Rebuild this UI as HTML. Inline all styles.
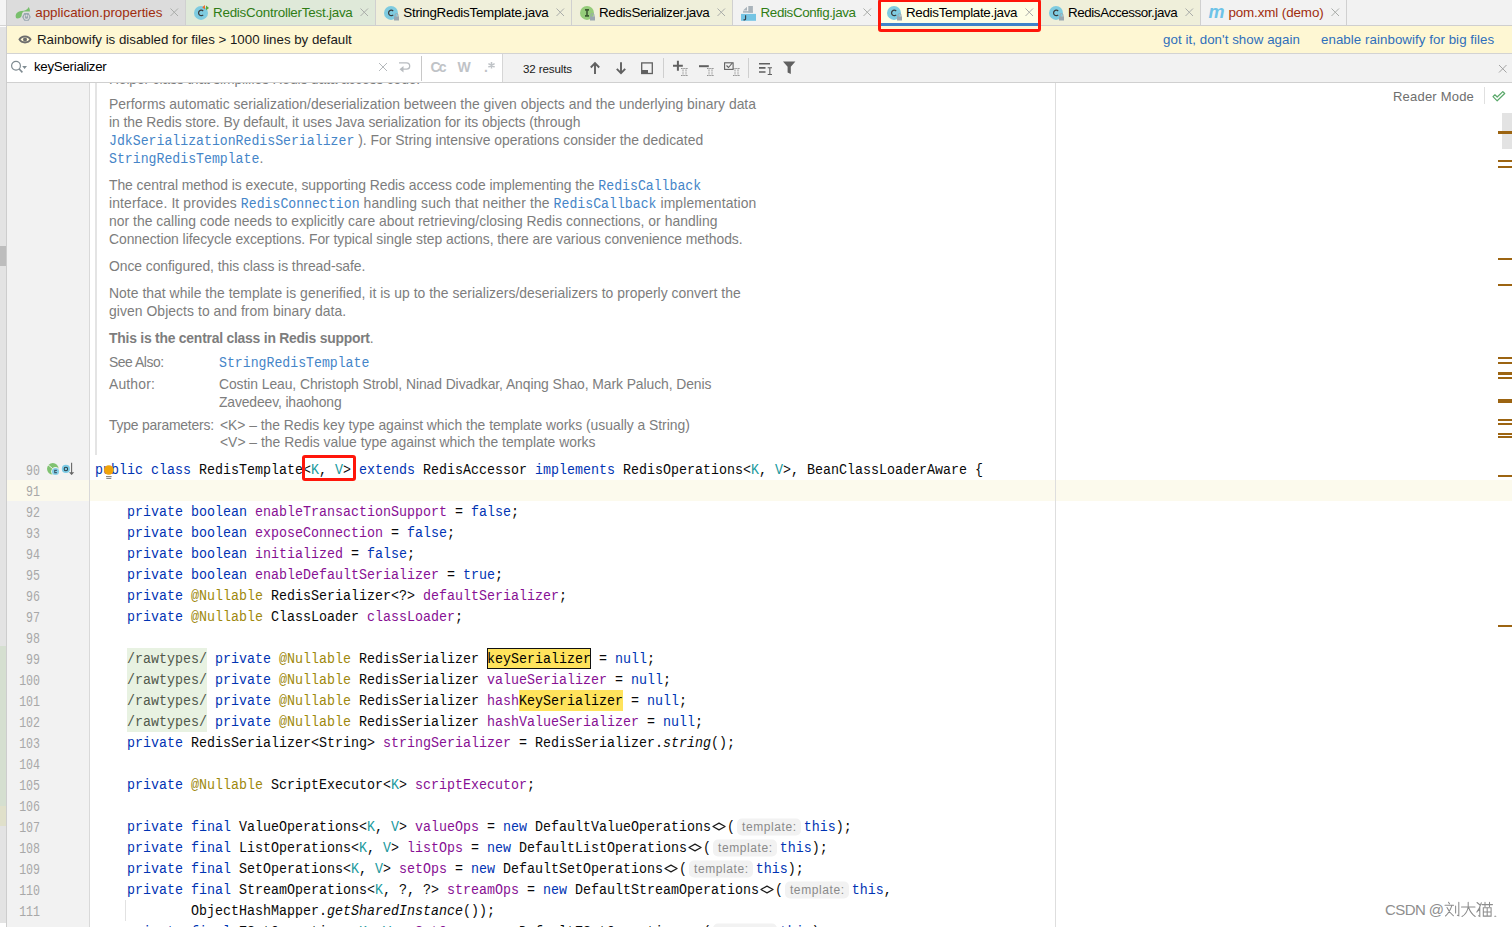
<!DOCTYPE html><html><head><meta charset="utf-8"><style>
*{margin:0;padding:0;box-sizing:border-box}
html,body{width:1512px;height:927px;overflow:hidden;background:#fff;position:relative}
body{font-family:"Liberation Sans",sans-serif}
.ui{font-family:"Liberation Sans",sans-serif;font-size:13.3px;line-height:16px;color:#000}
.code{font-family:"Liberation Mono",monospace;font-size:13.33px;line-height:21px;color:#080808;height:21px;transform:scaleY(1.1);transform-origin:0 5px}
.kw{color:#0033b3}.fd{color:#871094}.an{color:#9e880d}.tp{color:#20999d}
.ln{font-family:"Liberation Mono",monospace;font-size:11.6px;line-height:21px;color:#a8a8a8;text-align:right;width:40px;height:21px;transform:scaleY(1.2);transform-origin:0 6px}
.doc{font-family:"Liberation Sans",sans-serif;font-size:13.9px;line-height:18px;color:#7d7d7d}
.lk{display:inline-block;font-family:"Liberation Mono",monospace;font-size:13.2px;color:#4585c8;transform:scaleY(1.1);transform-origin:0 70%}
.hint{display:inline-block;font-family:"Liberation Sans",sans-serif;font-size:12px;letter-spacing:0.6px;color:#8a8a8a;background:#f2f2f2;border-radius:5px;height:17px;line-height:17px;padding:0 4px 0 5px;vertical-align:0px;margin:0 3px 0 2px;transform:scaleY(0.909);transform-origin:0 50%}
.tabt{font-family:"Liberation Sans",sans-serif;font-size:13.4px;line-height:16px}
</style></head><body><div style="position:absolute;left:0px;top:0px;width:6px;height:25px;background:#f4f4f4"></div><div style="position:absolute;left:0px;top:25px;width:6px;height:1px;background:#d4d4d4"></div><div style="position:absolute;left:0px;top:26px;width:6px;height:1px;background:#fdfdfd"></div><div style="position:absolute;left:0px;top:27px;width:6px;height:900px;background:#e3e3e3"></div><div style="position:absolute;left:6px;top:0px;width:1px;height:927px;background:#cdcdcd"></div><div style="position:absolute;left:0px;top:646px;width:6px;height:160px;background:#d5dfd0"></div><div style="position:absolute;left:0px;top:806px;width:6px;height:20px;background:#e0e0ca"></div><div style="position:absolute;left:0px;top:923px;width:6px;height:4px;background:#fff"></div><div style="position:absolute;left:0px;top:246px;width:6px;height:20px;background:#bdbdbd"></div><div style="position:absolute;left:7px;top:0px;width:1505px;height:25px;background:#f2f2f2"></div><div style="position:absolute;left:7px;top:25px;width:1505px;height:1px;background:#cfcfcf"></div><div style="position:absolute;left:7px;top:0px;width:178px;height:25px;background:#dcdcdc"></div><div style="position:absolute;left:185px;top:0px;width:1px;height:25px;background:#d0d0d0"></div><div class="tabt" id="qfad393cc" style="position:absolute;left:35.2px;top:5px;white-space:pre;color:#a02d0e;letter-spacing:0.000px">application.properties</div><svg style="position:absolute;left:170px;top:8px" width="9" height="9"><path d="M0.5 0.5L8 8M8 0.5L0.5 8" stroke="#a9aca9" stroke-width="1"/></svg><svg style="position:absolute;left:12px;top:3px" width="23" height="20" viewBox="12 3 23 20"><path d="M16.2 18.3C14.6 14.5 17 11.4 21.5 11 25 10.6 27.5 9.5 28.7 6.9 29.8 8.5 30 10 29.9 11.6L23.6 11.6C22.4 12.4 21.9 13.8 21.7 15.4 21.2 17.4 19 18.8 16.2 18.3z" fill="#78bf6c"/><path d="M22.1 16.9L24.3 13H28.6L30.8 16.9 28.6 20.8H24.3z" fill="#9aa7b0"/><path d="M25.3 15.3A2.2 2.2 0 1 0 27.7 15.3" stroke="#dcdcdc" stroke-width="1.1" fill="none"/><path d="M26.5 14.6v2" stroke="#dcdcdc" stroke-width="1"/></svg><div style="position:absolute;left:186px;top:0px;width:189px;height:25px;background:#dfe9d9"></div><div style="position:absolute;left:375px;top:0px;width:1px;height:25px;background:#d0d0d0"></div><div class="tabt" id="q5060e5fc" style="position:absolute;left:213px;top:5px;white-space:pre;color:#2f7d16;letter-spacing:-0.231px">RedisControllerTest.java</div><svg style="position:absolute;left:360px;top:8px" width="9" height="9"><path d="M0.5 0.5L8 8M8 0.5L0.5 8" stroke="#a9aca9" stroke-width="1"/></svg><svg style="position:absolute;left:194px;top:5px" width="16" height="16"><circle cx="7" cy="7.9" r="7" fill="#7ecbe0"/><path d="M9.2 6A2.7 2.7 0 1 0 9.2 9.8" stroke="#3a3a3a" stroke-width="1.2" fill="none"/><path d="M11 0L8.2 2.3 11 4.6z" fill="#e8702a"/><path d="M12 0.6l3 2.3-3 2.3z" fill="#59a83a"/></svg><div style="position:absolute;left:376px;top:0px;width:195px;height:25px;background:#efefda"></div><div style="position:absolute;left:571px;top:0px;width:1px;height:25px;background:#d0d0d0"></div><div class="tabt" id="qaf4875bb" style="position:absolute;left:403.3px;top:5px;white-space:pre;color:#000;letter-spacing:-0.276px">StringRedisTemplate.java</div><svg style="position:absolute;left:556px;top:8px" width="9" height="9"><path d="M0.5 0.5L8 8M8 0.5L0.5 8" stroke="#a9aca9" stroke-width="1"/></svg><svg style="position:absolute;left:384px;top:5px" width="16" height="16"><circle cx="7" cy="7.9" r="7" fill="#7ecbe0"/><path d="M9.2 6A2.7 2.7 0 1 0 9.2 9.8" stroke="#3a3a3a" stroke-width="1.2" fill="none"/><rect x="10" y="11.5" width="5" height="4" fill="#9aa7b0"/><path d="M11 12V10a1.5 1.5 0 0 1 3 0v2" stroke="#9aa7b0" fill="none"/></svg><div style="position:absolute;left:572px;top:0px;width:160px;height:25px;background:#efefda"></div><div style="position:absolute;left:732px;top:0px;width:1px;height:25px;background:#d0d0d0"></div><div class="tabt" id="qa6eb2fc3" style="position:absolute;left:599px;top:5px;white-space:pre;color:#000;letter-spacing:-0.361px">RedisSerializer.java</div><svg style="position:absolute;left:717px;top:8px" width="9" height="9"><path d="M0.5 0.5L8 8M8 0.5L0.5 8" stroke="#a9aca9" stroke-width="1"/></svg><svg style="position:absolute;left:580px;top:5px" width="16" height="16"><circle cx="7" cy="7.9" r="7" fill="#95cc7a"/><path d="M5 4.9h4M5 10.9h4M7 4.9v6" stroke="#3d5a32" stroke-width="1.6"/><rect x="10" y="11.5" width="5" height="4" fill="#9aa7b0"/><path d="M11 12V10a1.5 1.5 0 0 1 3 0v2" stroke="#9aa7b0" fill="none"/></svg><div style="position:absolute;left:733px;top:0px;width:145px;height:25px;background:#f2f2f2"></div><div style="position:absolute;left:878px;top:0px;width:1px;height:25px;background:#d0d0d0"></div><div class="tabt" id="q78b534ed" style="position:absolute;left:760.6px;top:5px;white-space:pre;color:#2f7d16;letter-spacing:-0.390px">RedisConfig.java</div><svg style="position:absolute;left:863px;top:8px" width="9" height="9"><path d="M0.5 0.5L8 8M8 0.5L0.5 8" stroke="#a9aca9" stroke-width="1"/></svg><svg style="position:absolute;left:741px;top:5px" width="16" height="17"><path d="M2 5.6L6 1.8v3.8z" fill="#aab4bc"/><rect x="7.3" y="1" width="4.6" height="6.7" fill="#aab4bc"/><rect x="2" y="6.1" width="9.9" height="1.6" fill="#aab4bc"/><rect x="0" y="8.9" width="15" height="6.9" fill="#74c4e4"/><path d="M4.6 10.2v3.6a1.1 1.1 0 0 1-1.1 1.1H2.5" stroke="#333c44" stroke-width="1.1" fill="none"/></svg><div style="position:absolute;left:879px;top:0px;width:161px;height:25px;background:#fefee6"></div><div style="position:absolute;left:1040px;top:0px;width:1px;height:25px;background:#d0d0d0"></div><div class="tabt" id="qc9c36ca3" style="position:absolute;left:906px;top:5px;white-space:pre;color:#000;letter-spacing:-0.315px">RedisTemplate.java</div><svg style="position:absolute;left:1025px;top:8px" width="9" height="9"><path d="M0.5 0.5L8 8M8 0.5L0.5 8" stroke="#a9aca9" stroke-width="1"/></svg><svg style="position:absolute;left:887px;top:5px" width="16" height="16"><circle cx="7" cy="7.9" r="7" fill="#7ecbe0"/><path d="M9.2 6A2.7 2.7 0 1 0 9.2 9.8" stroke="#3a3a3a" stroke-width="1.2" fill="none"/><rect x="10" y="11.5" width="5" height="4" fill="#9aa7b0"/><path d="M11 12V10a1.5 1.5 0 0 1 3 0v2" stroke="#9aa7b0" fill="none"/></svg><div style="position:absolute;left:1041px;top:0px;width:159px;height:25px;background:#efefda"></div><div style="position:absolute;left:1200px;top:0px;width:1px;height:25px;background:#d0d0d0"></div><div class="tabt" id="q6924a468" style="position:absolute;left:1068px;top:5px;white-space:pre;color:#000;letter-spacing:-0.420px">RedisAccessor.java</div><svg style="position:absolute;left:1185px;top:8px" width="9" height="9"><path d="M0.5 0.5L8 8M8 0.5L0.5 8" stroke="#a9aca9" stroke-width="1"/></svg><svg style="position:absolute;left:1049px;top:5px" width="16" height="16"><circle cx="7" cy="7.9" r="7" fill="#7ecbe0"/><path d="M9.2 6A2.7 2.7 0 1 0 9.2 9.8" stroke="#3a3a3a" stroke-width="1.2" fill="none"/><rect x="10" y="11.5" width="5" height="4" fill="#9aa7b0"/><path d="M11 12V10a1.5 1.5 0 0 1 3 0v2" stroke="#9aa7b0" fill="none"/></svg><div style="position:absolute;left:1201px;top:0px;width:145px;height:25px;background:#f2f2f2"></div><div style="position:absolute;left:1346px;top:0px;width:1px;height:25px;background:#d0d0d0"></div><div class="tabt" id="q48ef72a2" style="position:absolute;left:1228.4px;top:5px;white-space:pre;color:#a02d0e;letter-spacing:-0.110px">pom.xml (demo)</div><svg style="position:absolute;left:1331px;top:8px" width="9" height="9"><path d="M0.5 0.5L8 8M8 0.5L0.5 8" stroke="#a9aca9" stroke-width="1"/></svg><div style="position:absolute;left:1208.5px;top:3px;white-space:pre;font-family:Liberation Sans;font-style:italic;font-weight:bold;font-size:18px;color:#6ec3e8;line-height:19px;letter-spacing:-0.5px">m</div><div style="position:absolute;left:879px;top:23px;width:159px;height:3px;background:#4083c9"></div><div style="position:absolute;left:7px;top:26px;width:1505px;height:27px;background:#fef7d3"></div><div style="position:absolute;left:7px;top:53px;width:1505px;height:1px;background:#d3d3d3"></div><svg style="position:absolute;left:18px;top:34px" width="15" height="11"><path d="M1.4 5.4C3.6 1.3 10.4 1.3 12.6 5.4 10.4 9.5 3.6 9.5 1.4 5.4z" fill="none" stroke="#6c6c6c" stroke-width="1.8"/><circle cx="7" cy="5.4" r="2" fill="#6c6c6c"/></svg><div class="ui" id="q455a4f27" style="position:absolute;left:37px;top:32px;white-space:pre;color:#1a1a1a;letter-spacing:-0.008px">Rainbowify is disabled for files &gt; 1000 lines by default</div><div class="ui" id="qab4cdfda" style="position:absolute;left:1163px;top:32px;white-space:pre;color:#2f6fbb;letter-spacing:0.058px">got it, don't show again</div><div class="ui" id="q9e3505c4" style="position:absolute;left:1321px;top:32px;white-space:pre;color:#2f6fbb;letter-spacing:0.058px">enable rainbowify for big files</div><div style="position:absolute;left:7px;top:54px;width:1505px;height:28px;background:#f2f2f2"></div><div style="position:absolute;left:7px;top:54px;width:495px;height:28px;background:#fff"></div><div style="position:absolute;left:502px;top:54px;width:1px;height:28px;background:#d6d6d6"></div><div style="position:absolute;left:7px;top:82px;width:1505px;height:1px;background:#d0d0d0"></div><svg style="position:absolute;left:10px;top:60px" width="18" height="14"><circle cx="6" cy="5.7" r="4.4" fill="none" stroke="#7f8b91" stroke-width="1.2"/><path d="M9.2 9L12.4 12.4" stroke="#7f8b91" stroke-width="1.6"/><path d="M12.2 6h4.8l-2.4 3z" fill="#7f8b91"/></svg><div class="ui" id="q11428884" style="position:absolute;left:34px;top:59px;white-space:pre;color:#000;letter-spacing:-0.279px">keySerializer</div><svg style="position:absolute;left:378px;top:62px" width="10" height="10"><path d="M1 1L9 9M9 1L1 9" stroke="#b5b9bc" stroke-width="1"/></svg><svg style="position:absolute;left:398px;top:61px" width="15" height="13"><path d="M1 1.8h7.5a3.2 3.2 0 0 1 0 6.4H5" stroke="#b8bcc0" stroke-width="1.3" fill="none"/><path d="M1.5 8.2L5.5 5v6.5z" fill="#b8bcc0"/></svg><div style="position:absolute;left:421px;top:56px;width:1px;height:25px;background:#c8c8c8"></div><div class="ui" id="qe2fc4274" style="position:absolute;left:430.5px;top:58.5px;white-space:pre;font-weight:bold;color:#bfc3c7;font-size:14px;letter-spacing:-1.748px">Cc</div><div class="ui" style="position:absolute;left:457.5px;top:58.5px;white-space:pre;font-weight:bold;color:#bfc3c7;font-size:14px">W</div><div class="ui" style="position:absolute;left:484px;top:58.5px;white-space:pre;font-weight:bold;color:#bfc3c7;font-size:14px">.</div><svg style="position:absolute;left:487px;top:61px" width="10" height="9"><path d="M4.5 1v6.5M1.4 2.6l6.2 3.4M1.4 6l6.2-3.4" stroke="#bfc3c7" stroke-width="1.5"/></svg><div class="ui" id="qa0d76594" style="position:absolute;left:523px;top:60.5px;white-space:pre;color:#1a1a1a;font-size:11.6px;letter-spacing:-0.137px">32 results</div><svg style="position:absolute;left:580px;top:55px" width="220" height="27" viewBox="580 55 220 27"><path d="M595 63.5v10.5M590.8 67.5L595 63.2l4.2 4.3" stroke="#606060" stroke-width="1.9" fill="none"/><path d="M621 62.3v10.5M616.8 68.8l4.2 4.3 4.2-4.3" stroke="#606060" stroke-width="1.9" fill="none"/><rect x="641.7" y="62.9" width="10.6" height="10.6" fill="none" stroke="#606060" stroke-width="1.3"/><rect x="641.7" y="70" width="6.3" height="3.5" fill="#606060"/><path d="M663.5 58v20" stroke="#cfcfcf" stroke-width="1"/><path d="M677.9 60.8v9.9M673 65.75h9.8" stroke="#606060" stroke-width="2"/><path d="M681 68.5h7M681 75.5h7M683 68.5v7M686 68.5v7" stroke="#7a7a7a" stroke-width="0.8" stroke-dasharray="1 0.6"/><path d="M699 66.2h9.8" stroke="#606060" stroke-width="2"/><path d="M707 68.5h7M707 75.5h7M709 68.5v7M712 68.5v7" stroke="#7a7a7a" stroke-width="0.8" stroke-dasharray="1 0.6"/><rect x="724.6" y="62.8" width="8.5" height="6.6" fill="none" stroke="#606060" stroke-width="1.1"/><path d="M726.5 65.5l2 2 3.8-4.5" stroke="#606060" stroke-width="1.1" fill="none"/><path d="M733 68.5h7M733 75.5h7M735 68.5v7M738 68.5v7" stroke="#7a7a7a" stroke-width="0.8" stroke-dasharray="1 0.6"/><path d="M748.5 58v20" stroke="#cfcfcf" stroke-width="1"/><path d="M759 63.8h11M759 67.9h6.5M759 72h6.5" stroke="#606060" stroke-width="1.6"/><path d="M767.7 67.7h4.3M767.7 74.5h4.3M769.85 67.7v6.8" stroke="#606060" stroke-width="1.1"/><path d="M783 61.5h12.4l-4.6 5.3v7.1l-3.2-1.5v-5.6z" fill="#606060"/></svg><svg style="position:absolute;left:1497.5px;top:63.5px" width="10" height="10"><path d="M1 1L8.5 8.5M8.5 1L1 8.5" stroke="#a3a3a3" stroke-width="1"/></svg><div style="position:absolute;left:0;top:0;width:1512px;height:927px;clip-path:inset(83px 0 0 0)"><div style="position:absolute;left:7px;top:83px;width:82px;height:844px;background:#f2f2f2"></div><div style="position:absolute;left:89px;top:83px;width:1px;height:844px;background:#d9d9d9"></div><div style="position:absolute;left:7px;top:480px;width:82px;height:21px;background:#fbf9ec"></div><div style="position:absolute;left:90px;top:480px;width:1422px;height:21px;background:#fcfaed"></div><div style="position:absolute;left:1055px;top:83px;width:1px;height:844px;background:#dedede"></div><div style="position:absolute;left:95px;top:83px;width:2px;height:372px;background:#e4e4e4"></div><div class="doc" id="qa7823ec8" style="position:absolute;left:109px;top:69.5px;white-space:pre;"><span class="dt" style="letter-spacing:-0.166px">Helper class that simplifies Redis data access code.</span></div><div class="doc" id="q3a0f4289" style="position:absolute;left:109px;top:95.1px;white-space:pre;"><span class="dt" style="letter-spacing:0.014px">Performs automatic serialization/deserialization between the given objects and the underlying binary data</span></div><div class="doc" id="q1f2d083b" style="position:absolute;left:109px;top:113.1px;white-space:pre;"><span class="dt" style="letter-spacing:-0.069px">in the Redis store. By default, it uses Java serialization for its objects (through</span></div><div class="doc" id="q95852e35" style="position:absolute;left:109px;top:131.0px;white-space:pre;"><span class="lk">JdkSerializationRedisSerializer</span><span class="dt" style="letter-spacing:0.011px"> ). For String intensive operations consider the dedicated</span></div><div class="doc" id="q18907178" style="position:absolute;left:109px;top:149.0px;white-space:pre;"><span class="lk">StringRedisTemplate</span><span class="dt" style="letter-spacing:0.766px">.</span></div><div class="doc" id="q07f6d538" style="position:absolute;left:109px;top:176.0px;white-space:pre;"><span class="dt" style="letter-spacing:-0.043px">The central method is execute, supporting Redis access code implementing the </span><span class="lk">RedisCallback</span></div><div class="doc" id="q28112532" style="position:absolute;left:109px;top:194.0px;white-space:pre;"><span class="dt" style="letter-spacing:0.126px">interface. It provides </span><span class="lk">RedisConnection</span><span class="dt" style="letter-spacing:0.126px"> handling such that neither the </span><span class="lk">RedisCallback</span><span class="dt" style="letter-spacing:0.126px"> implementation</span></div><div class="doc" id="qb26b40bd" style="position:absolute;left:109px;top:212.0px;white-space:pre;"><span class="dt" style="letter-spacing:0.030px">nor the calling code needs to explicitly care about retrieving/closing Redis connections, or handling</span></div><div class="doc" id="q74594b92" style="position:absolute;left:109px;top:230.0px;white-space:pre;"><span class="dt" style="letter-spacing:-0.048px">Connection lifecycle exceptions. For typical single step actions, there are various convenience methods.</span></div><div class="doc" id="qce68679b" style="position:absolute;left:109px;top:257.3px;white-space:pre;"><span class="dt" style="letter-spacing:-0.054px">Once configured, this class is thread-safe.</span></div><div class="doc" id="q4c7e26cf" style="position:absolute;left:109px;top:284.1px;white-space:pre;"><span class="dt" style="letter-spacing:0.037px">Note that while the template is generified, it is up to the serializers/deserializers to properly convert the</span></div><div class="doc" id="qc9360988" style="position:absolute;left:109px;top:302.2px;white-space:pre;"><span class="dt" style="letter-spacing:0.067px">given Objects to and from binary data.</span></div><div class="doc" id="qb8a40281" style="position:absolute;left:109px;top:329.4px;white-space:pre;"><b class="dt" style="letter-spacing:-0.224px">This is the central class in Redis support</b><span class="dt" style="letter-spacing:-0.224px">.</span></div><div class="doc" id="q09a31dd8" style="position:absolute;left:109px;top:353.2px;white-space:pre;"><span class="dt" style="letter-spacing:-0.455px">See Also:</span></div><div class="doc" id="q25bb5db9" style="position:absolute;left:109px;top:375.2px;white-space:pre;"><span class="dt" style="letter-spacing:0.172px">Author:</span></div><div class="doc" id="q7adfb0dc" style="position:absolute;left:109px;top:415.5px;white-space:pre;"><span class="dt" style="letter-spacing:-0.206px">Type parameters:</span></div><div class="doc" style="position:absolute;left:219px;top:353.2px;white-space:pre;"><span class="lk">StringRedisTemplate</span></div><div class="doc" id="qb4d459d7" style="position:absolute;left:219px;top:375.2px;white-space:pre;"><span class="dt" style="letter-spacing:-0.072px">Costin Leau, Christoph Strobl, Ninad Divadkar, Anqing Shao, Mark Paluch, Denis</span></div><div class="doc" id="q210d8e46" style="position:absolute;left:219px;top:393.3px;white-space:pre;"><span class="dt" style="letter-spacing:-0.131px">Zavedeev, ihaohong</span></div><div class="doc" id="q4d720376" style="position:absolute;left:220px;top:415.5px;white-space:pre;"><span class="dt" style="letter-spacing:-0.026px">&lt;K&gt; – the Redis key type against which the template works (usually a String)</span></div><div class="doc" id="qa71e06fb" style="position:absolute;left:220px;top:433.0px;white-space:pre;"><span class="dt" style="letter-spacing:0.004px">&lt;V&gt; – the Redis value type against which the template works</span></div><div class="ln" style="position:absolute;left:0px;top:459px;white-space:pre;">90</div><div class="ln" style="position:absolute;left:0px;top:480px;white-space:pre;">91</div><div class="ln" style="position:absolute;left:0px;top:501px;white-space:pre;">92</div><div class="ln" style="position:absolute;left:0px;top:522px;white-space:pre;">93</div><div class="ln" style="position:absolute;left:0px;top:543px;white-space:pre;">94</div><div class="ln" style="position:absolute;left:0px;top:564px;white-space:pre;">95</div><div class="ln" style="position:absolute;left:0px;top:585px;white-space:pre;">96</div><div class="ln" style="position:absolute;left:0px;top:606px;white-space:pre;">97</div><div class="ln" style="position:absolute;left:0px;top:627px;white-space:pre;">98</div><div class="ln" style="position:absolute;left:0px;top:648px;white-space:pre;">99</div><div class="ln" style="position:absolute;left:0px;top:669px;white-space:pre;">100</div><div class="ln" style="position:absolute;left:0px;top:690px;white-space:pre;">101</div><div class="ln" style="position:absolute;left:0px;top:711px;white-space:pre;">102</div><div class="ln" style="position:absolute;left:0px;top:732px;white-space:pre;">103</div><div class="ln" style="position:absolute;left:0px;top:753px;white-space:pre;">104</div><div class="ln" style="position:absolute;left:0px;top:774px;white-space:pre;">105</div><div class="ln" style="position:absolute;left:0px;top:795px;white-space:pre;">106</div><div class="ln" style="position:absolute;left:0px;top:816px;white-space:pre;">107</div><div class="ln" style="position:absolute;left:0px;top:837px;white-space:pre;">108</div><div class="ln" style="position:absolute;left:0px;top:858px;white-space:pre;">109</div><div class="ln" style="position:absolute;left:0px;top:879px;white-space:pre;">110</div><div class="ln" style="position:absolute;left:0px;top:900px;white-space:pre;">111</div><div class="ln" style="position:absolute;left:0px;top:921px;white-space:pre;">112</div><div style="position:absolute;left:125px;top:900px;width:1px;height:21px;background:#e2e2e2"></div><div style="position:absolute;left:127px;top:648px;width:80px;height:84px;background:#e8f2e2"></div><div style="position:absolute;left:487px;top:648px;width:104px;height:21px;background:#ffe35c;border:1px solid #111"></div><div style="position:absolute;left:519px;top:690px;width:104px;height:21px;background:#ffe35c"></div><div class="code" style="position:absolute;left:95px;top:459px;white-space:pre;"><span class="kw">public</span> <span class="kw">class</span> RedisTemplate&lt;<span class="tp">K</span>, <span class="tp">V</span>&gt; <span class="kw">extends</span> RedisAccessor <span class="kw">implements</span> RedisOperations&lt;<span class="tp">K</span>, <span class="tp">V</span>&gt;, BeanClassLoaderAware {</div><div class="code" style="position:absolute;left:95px;top:480px;white-space:pre;"></div><div class="code" style="position:absolute;left:95px;top:501px;white-space:pre;">    <span class="kw">private</span> <span class="kw">boolean</span> <span class="fd">enableTransactionSupport</span> = <span class="kw">false</span>;</div><div class="code" style="position:absolute;left:95px;top:522px;white-space:pre;">    <span class="kw">private</span> <span class="kw">boolean</span> <span class="fd">exposeConnection</span> = <span class="kw">false</span>;</div><div class="code" style="position:absolute;left:95px;top:543px;white-space:pre;">    <span class="kw">private</span> <span class="kw">boolean</span> <span class="fd">initialized</span> = <span class="kw">false</span>;</div><div class="code" style="position:absolute;left:95px;top:564px;white-space:pre;">    <span class="kw">private</span> <span class="kw">boolean</span> <span class="fd">enableDefaultSerializer</span> = <span class="kw">true</span>;</div><div class="code" style="position:absolute;left:95px;top:585px;white-space:pre;">    <span class="kw">private</span> <span class="an">@Nullable</span> RedisSerializer&lt;?&gt; <span class="fd">defaultSerializer</span>;</div><div class="code" style="position:absolute;left:95px;top:606px;white-space:pre;">    <span class="kw">private</span> <span class="an">@Nullable</span> ClassLoader <span class="fd">classLoader</span>;</div><div class="code" style="position:absolute;left:95px;top:627px;white-space:pre;"></div><div class="code" style="position:absolute;left:95px;top:648px;white-space:pre;">    <span style="color:#51594c">/rawtypes/</span> <span class="kw">private</span> <span class="an">@Nullable</span> RedisSerializer <span style="color:#000">keySerializer</span> = <span class="kw">null</span>;</div><div class="code" style="position:absolute;left:95px;top:669px;white-space:pre;">    <span style="color:#51594c">/rawtypes/</span> <span class="kw">private</span> <span class="an">@Nullable</span> RedisSerializer <span class="fd">valueSerializer</span> = <span class="kw">null</span>;</div><div class="code" style="position:absolute;left:95px;top:690px;white-space:pre;">    <span style="color:#51594c">/rawtypes/</span> <span class="kw">private</span> <span class="an">@Nullable</span> RedisSerializer <span class="fd">hash</span><span style="color:#000">KeySerializer</span> = <span class="kw">null</span>;</div><div class="code" style="position:absolute;left:95px;top:711px;white-space:pre;">    <span style="color:#51594c">/rawtypes/</span> <span class="kw">private</span> <span class="an">@Nullable</span> RedisSerializer <span class="fd">hashValueSerializer</span> = <span class="kw">null</span>;</div><div class="code" style="position:absolute;left:95px;top:732px;white-space:pre;">    <span class="kw">private</span> RedisSerializer&lt;String&gt; <span class="fd">stringSerializer</span> = RedisSerializer.<i>string</i>();</div><div class="code" style="position:absolute;left:95px;top:753px;white-space:pre;"></div><div class="code" style="position:absolute;left:95px;top:774px;white-space:pre;">    <span class="kw">private</span> <span class="an">@Nullable</span> ScriptExecutor&lt;<span class="tp">K</span>&gt; <span class="fd">scriptExecutor</span>;</div><div class="code" style="position:absolute;left:95px;top:795px;white-space:pre;"></div><div class="code" style="position:absolute;left:95px;top:816px;white-space:pre;">    <span class="kw">private</span> <span class="kw">final</span> ValueOperations&lt;<span class="tp">K</span>, <span class="tp">V</span>&gt; <span class="fd">valueOps</span> = <span class="kw">new</span> DefaultValueOperations<svg width="16" height="21" style="vertical-align:top" viewBox="0 0 16 21"><path d="M1.9 10L8 6.9 14.1 10 8 13.1z" fill="none" stroke="#1a1a1a" stroke-width="1.15" stroke-linejoin="round"/></svg>(<span class="hint">template:</span><span class="kw">this</span>);</div><div class="code" style="position:absolute;left:95px;top:837px;white-space:pre;">    <span class="kw">private</span> <span class="kw">final</span> ListOperations&lt;<span class="tp">K</span>, <span class="tp">V</span>&gt; <span class="fd">listOps</span> = <span class="kw">new</span> DefaultListOperations<svg width="16" height="21" style="vertical-align:top" viewBox="0 0 16 21"><path d="M1.9 10L8 6.9 14.1 10 8 13.1z" fill="none" stroke="#1a1a1a" stroke-width="1.15" stroke-linejoin="round"/></svg>(<span class="hint">template:</span><span class="kw">this</span>);</div><div class="code" style="position:absolute;left:95px;top:858px;white-space:pre;">    <span class="kw">private</span> <span class="kw">final</span> SetOperations&lt;<span class="tp">K</span>, <span class="tp">V</span>&gt; <span class="fd">setOps</span> = <span class="kw">new</span> DefaultSetOperations<svg width="16" height="21" style="vertical-align:top" viewBox="0 0 16 21"><path d="M1.9 10L8 6.9 14.1 10 8 13.1z" fill="none" stroke="#1a1a1a" stroke-width="1.15" stroke-linejoin="round"/></svg>(<span class="hint">template:</span><span class="kw">this</span>);</div><div class="code" style="position:absolute;left:95px;top:879px;white-space:pre;">    <span class="kw">private</span> <span class="kw">final</span> StreamOperations&lt;<span class="tp">K</span>, ?, ?&gt; <span class="fd">streamOps</span> = <span class="kw">new</span> DefaultStreamOperations<svg width="16" height="21" style="vertical-align:top" viewBox="0 0 16 21"><path d="M1.9 10L8 6.9 14.1 10 8 13.1z" fill="none" stroke="#1a1a1a" stroke-width="1.15" stroke-linejoin="round"/></svg>(<span class="hint">template:</span><span class="kw">this</span>,</div><div class="code" style="position:absolute;left:95px;top:900px;white-space:pre;">            ObjectHashMapper.<i>getSharedInstance</i>());</div><div class="code" style="position:absolute;left:95px;top:921px;white-space:pre;">    <span class="kw">private</span> <span class="kw">final</span> ZSetOperations&lt;<span class="tp">K</span>, <span class="tp">V</span>&gt; <span class="fd">zSetOps</span> = <span class="kw">new</span> DefaultZSetOperations<svg width="16" height="21" style="vertical-align:top" viewBox="0 0 16 21"><path d="M1.9 10L8 6.9 14.1 10 8 13.1z" fill="none" stroke="#1a1a1a" stroke-width="1.15" stroke-linejoin="round"/></svg>(<span class="hint">template:</span><span class="kw">this</span>);</div><div style="position:absolute;left:302px;top:455px;width:54px;height:26px;border:3px solid #ff160a;border-radius:3px"></div><svg style="position:absolute;left:40px;top:455px" width="80" height="30" viewBox="40 455 80 30" shape-rendering="geometricPrecision"><circle cx="52.8" cy="468.8" r="5.8" fill="#80c271"/><path d="M47.3 464.2L52.6 468.6" stroke="#f2f2f2" stroke-width="1"/><circle cx="55.5" cy="471.5" r="4.4" fill="#f2f2f2"/><circle cx="55.5" cy="471.5" r="3.6" fill="#86cfe8"/><path d="M56.9 470.4H54.7V472.6H56.9" stroke="#3d5b6e" stroke-width="1.1" fill="none"/><circle cx="65.9" cy="468.9" r="4.1" fill="#7ccbe6"/><circle cx="65.9" cy="468.9" r="1.75" fill="none" stroke="#2d3e45" stroke-width="1.05"/><path d="M71.6 462.8v11.5" stroke="#666" stroke-width="1.1"/><path d="M69 472.2l2.6 2.8 2.6-2.8z" fill="#666"/><circle cx="108.8" cy="470" r="4.8" fill="#f0a30a"/><path d="M106 476.6h5.6M106.3 478.4h5" stroke="#6a6a6a" stroke-width="0.9"/></svg><div class="ui" id="qd6f96c8a" style="position:absolute;left:1393px;top:89px;white-space:pre;color:#6e6e6e;font-size:13px;letter-spacing:0.202px">Reader Mode</div><div style="position:absolute;left:1484px;top:87px;width:1px;height:17px;background:#e0e0e0"></div><svg style="position:absolute;left:1492px;top:91px" width="14" height="11"><path d="M1 5.6L2.9 3.8 5.2 6 10.8 0.6 12.7 2.5 5.2 9.8z" fill="none" stroke="#5aa86a" stroke-width="1.2" stroke-linejoin="round"/></svg><div style="position:absolute;left:1502px;top:113px;width:10px;height:36px;background:#e3e3e3"></div><div style="position:absolute;left:1498px;top:131px;width:14px;height:3px;background:#9c6411"></div><div style="position:absolute;left:1498px;top:160px;width:14px;height:2px;background:#9c6411"></div><div style="position:absolute;left:1498px;top:166px;width:14px;height:2px;background:#9c6411"></div><div style="position:absolute;left:1498px;top:258px;width:14px;height:2px;background:#9c6411"></div><div style="position:absolute;left:1498px;top:284px;width:14px;height:2px;background:#9c6411"></div><div style="position:absolute;left:1498px;top:357px;width:14px;height:2px;background:#9c6411"></div><div style="position:absolute;left:1498px;top:362px;width:14px;height:2px;background:#9c6411"></div><div style="position:absolute;left:1498px;top:372px;width:14px;height:3px;background:#9c6411"></div><div style="position:absolute;left:1498px;top:377px;width:14px;height:2px;background:#9c6411"></div><div style="position:absolute;left:1498px;top:399px;width:14px;height:4px;background:#9c6411"></div><div style="position:absolute;left:1498px;top:419px;width:14px;height:2px;background:#9c6411"></div><div style="position:absolute;left:1498px;top:423px;width:14px;height:2px;background:#9c6411"></div><div style="position:absolute;left:1498px;top:433px;width:14px;height:2px;background:#9c6411"></div><div style="position:absolute;left:1498px;top:436px;width:14px;height:2px;background:#9c6411"></div><div style="position:absolute;left:1498px;top:475px;width:14px;height:2px;background:#9c6411"></div><div style="position:absolute;left:1498px;top:625px;width:14px;height:2px;background:#9c6411"></div></div><div style="position:absolute;left:878px;top:-1px;width:163px;height:33px;border:3px solid #ff160a;border-radius:3px"></div><div class="ui" id="q85ec876e" style="position:absolute;left:1385px;top:901px;white-space:pre;color:#8e8e8e;font-size:15px;line-height:18px;letter-spacing:-0.568px">CSDN @</div><svg style="position:absolute;left:1444px;top:901px" width="56" height="17" viewBox="0 0 56 17"><g fill="none" stroke="#8c8c8c" stroke-width="1.05" stroke-linecap="round"><path d="M4.5 1.2l1 1.6M1 4.2h8.6M8 4.2C6.5 9 4.5 12.5 1.5 15M3 6.5c1.5 3.5 3.5 6 6.5 8.3M11.6 5v7M14.8 1.3v13.5l-1.4-.6"/><path d="M17.5 6h13.5M24.2 1.2v4.8C23.5 10 21.5 13.5 18 15.5M24.6 6.5c1.5 4 3.5 7 6.6 9"/><path d="M33 1.5l3 2.5M37.3 1.8C36 6 34.5 9 32.8 11M35.8 5.5v9.8l-1.2-.6M35.2 8.5l-2.3 2.4M38 3.6h10.5M41 1.2v4.2M45.5 1.2v4.2M39.3 6.8h7.8v8.3h-7.8zM39.3 10.9h7.8M43.2 6.8v8.3"/><path d="M50.8 15.3h1"/></g></svg></body></html>
